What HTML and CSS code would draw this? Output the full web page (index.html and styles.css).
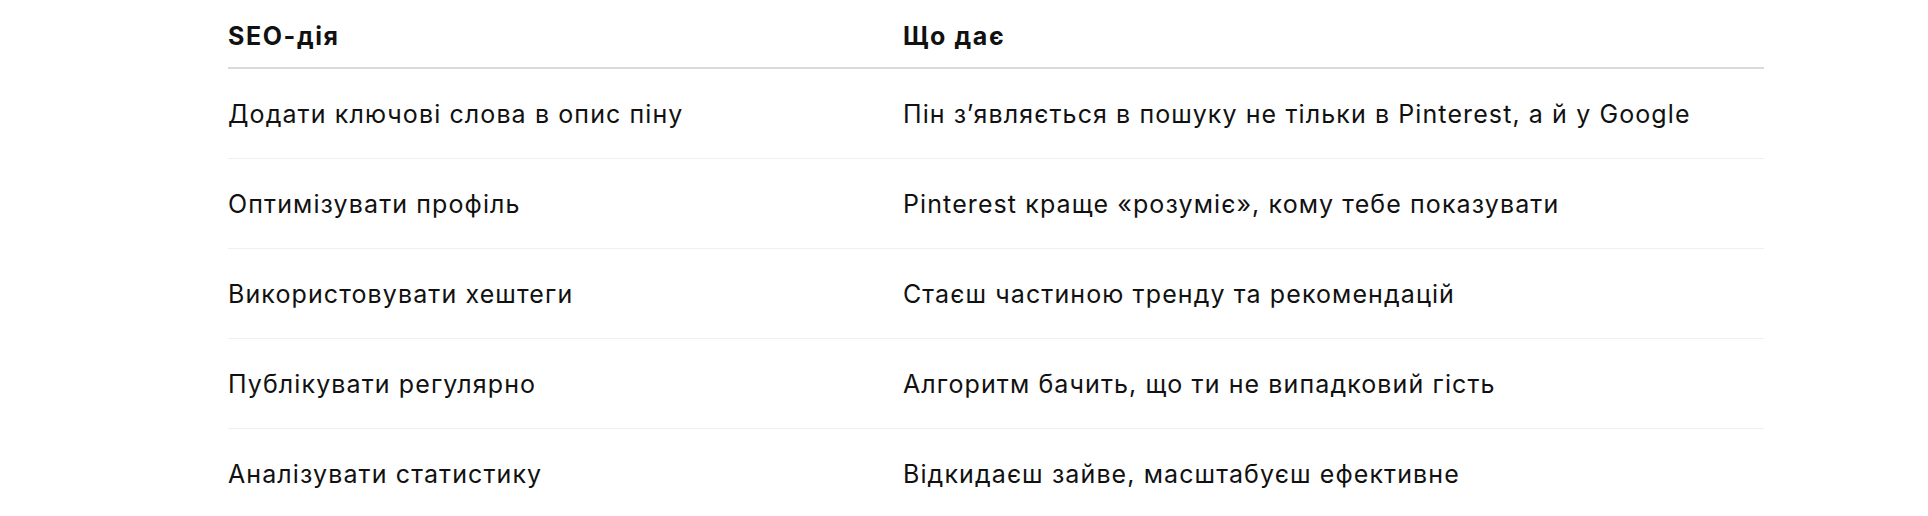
FILE: index.html
```html
<!DOCTYPE html>
<html lang="uk">
<head>
<meta charset="utf-8">
<link rel="stylesheet" href="styles.css">
</head>
<body>
<div class="wrap">
<table class="seo">
  <colgroup><col class="c1"><col class="c2"></colgroup>
  <thead>
    <tr><th>SEO-дія</th><th>Що дає</th></tr>
  </thead>
  <tbody>
    <tr><td>Додати ключові слова в опис піну</td><td>Пін з’являється в пошуку не тільки в Pinterest, а й у Google</td></tr>
    <tr><td>Оптимізувати профіль</td><td>Pinterest краще «розуміє», кому тебе показувати</td></tr>
    <tr><td>Використовувати хештеги</td><td>Стаєш частиною тренду та рекомендацій</td></tr>
    <tr><td>Публікувати регулярно</td><td>Алгоритм бачить, що ти не випадковий гість</td></tr>
    <tr><td>Аналізувати статистику</td><td>Відкидаєш зайве, масштабуєш ефективне</td></tr>
  </tbody>
</table>
</div>
</body>
</html>
```
FILE: styles.css
```css
html, body {
  margin: 0;
  padding: 0;
  background: #ffffff;
}
body {
  font-family: Inter, "Noto Sans", "Liberation Sans", sans-serif;
  color: #111111;
}
.wrap {
  padding-left: 228px;
  width: 1536px;
}
.seo {
  width: 1536px;
  border-collapse: collapse;
  table-layout: fixed;
}
.c1 { width: 675px; }
.seo th {
  text-align: left;
  font-weight: 700;
  font-size: 25px;
  line-height: 36px;
  letter-spacing: 1.6px;
  padding: 18px 0 13px 0;
  border-bottom: 2px solid #dadada;
}
.seo td {
  font-size: 25px;
  line-height: 36px;
  letter-spacing: 1.1px;
  font-weight: 400;
  padding: 27px 0 26px 0;
  border-bottom: 1px solid #efefef;
}
```
